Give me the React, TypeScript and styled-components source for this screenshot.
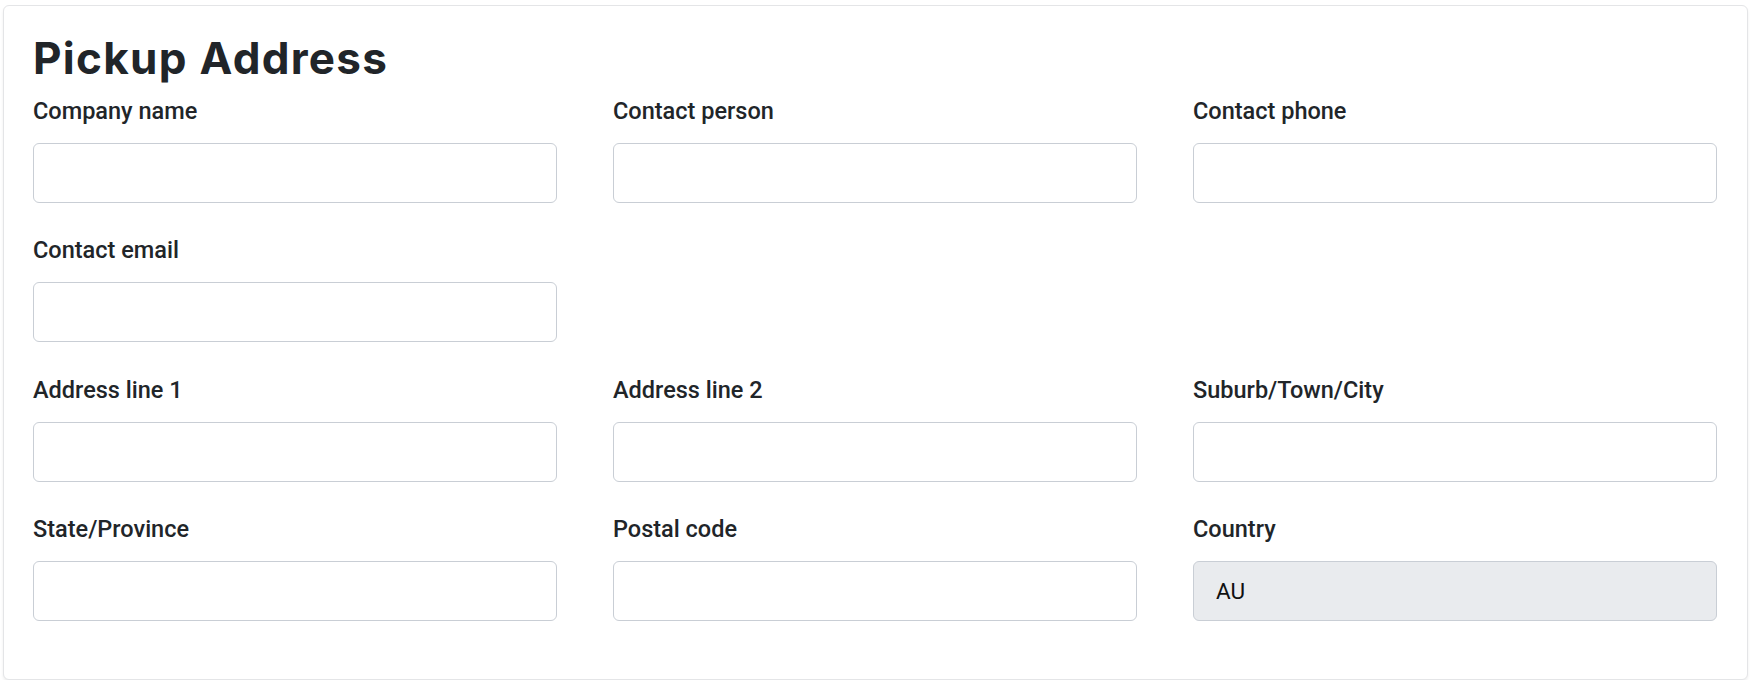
import styled, { createGlobalStyle } from "styled-components";

type Field = {
  label: string;
  value?: string;
  readOnly?: boolean;
  newRow?: boolean;
};

const FIELDS: Field[] = [
  { label: "Company name" },
  { label: "Contact person" },
  { label: "Contact phone" },
  { label: "Contact email" },
  { label: "Address line 1", newRow: true },
  { label: "Address line 2" },
  { label: "Suburb/Town/City" },
  { label: "State/Province" },
  { label: "Postal code" },
  { label: "Country", value: "AU", readOnly: true },
];

const GlobalStyle = createGlobalStyle`
  html, body {
    margin: 0;
    padding: 0;
    background: #ffffff;
  }
  body {
    font-family: Roboto, "Liberation Sans", sans-serif;
    color: #212529;
  }
  * {
    box-sizing: border-box;
  }
`;

export default function App() {
  return (
    <>
      <GlobalStyle />
      <Page>
        <Card>
          <Title>Pickup Address</Title>
          <FieldGrid>
            {FIELDS.map((field) => (
              <FieldBlock key={field.label} $newRow={field.newRow}>
                <Label>{field.label}</Label>
                <Input
                  type="text"
                  defaultValue={field.value ?? ""}
                  readOnly={field.readOnly}
                  $disabled={field.readOnly}
                />
              </FieldBlock>
            ))}
          </FieldGrid>
        </Card>
      </Page>
    </>
  );
}

const Page = styled.div`
  padding: 5px 10px 0 3px;
`;

const Card = styled.section`
  background: #ffffff;
  border: 1px solid #e4e5e7;
  border-radius: 6px;
  box-shadow: 0 2px 3px rgba(0, 0, 0, 0.07);
  padding: 26px 30px 58px 29px;
`;

const Title = styled.h2`
  margin: 0 0 10px;
  font-family: Inter, "Noto Sans", sans-serif;
  font-weight: 700;
  font-size: 44px;
  line-height: 1.2;
  letter-spacing: 1.3px;
  color: #212529;
`;

const FieldGrid = styled.div`
  display: grid;
  grid-template-columns: repeat(3, 1fr);
  column-gap: 56px;
  row-gap: 31.5px;
`;

const FieldBlock = styled.div<{ $newRow?: boolean }>`
  display: flex;
  flex-direction: column;
  gap: 15px;
  ${({ $newRow }) => ($newRow ? "grid-column-start: 1;" : "")}
`;

const Label = styled.label`
  font-family: Roboto, "Liberation Sans", sans-serif;
  font-weight: 500;
  font-size: 23.5px;
  line-height: 33px;
  color: #212529;
`;

const Input = styled.input<{ $disabled?: boolean }>`
  width: 100%;
  height: 60px;
  padding: 0 22px;
  border: 1px solid #c9ced5;
  border-radius: 6px;
  background: ${({ $disabled }) => ($disabled ? "#e9ebee" : "#ffffff")};
  font-family: Roboto, "Liberation Sans", sans-serif;
  font-size: 22.5px;
  color: #111111;
  outline: none;
`;
